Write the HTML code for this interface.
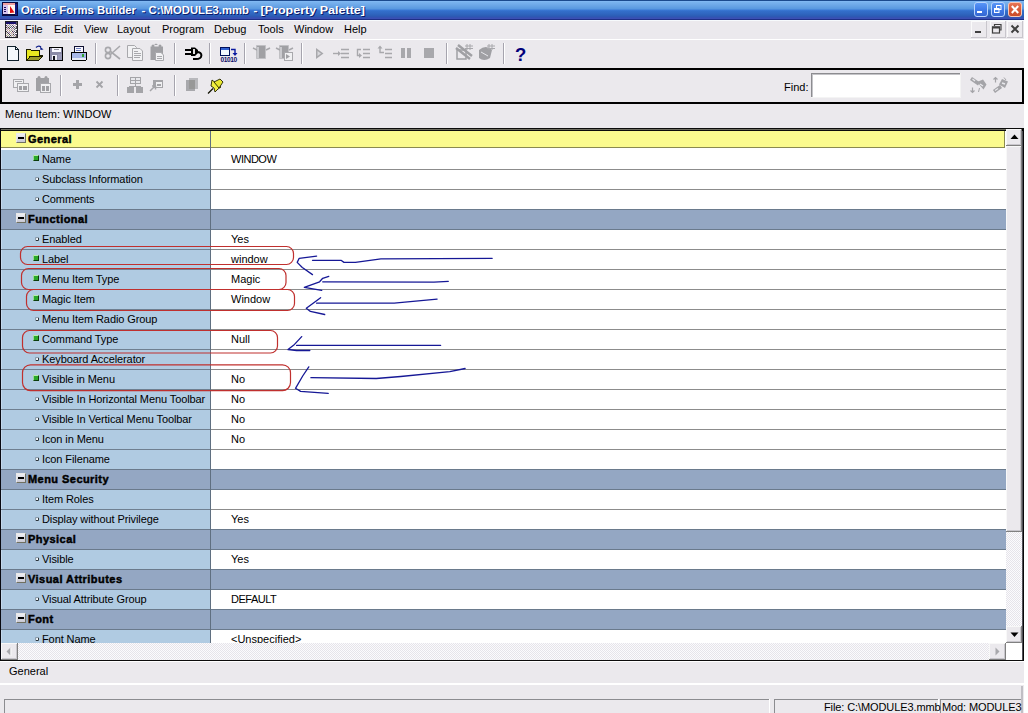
<!DOCTYPE html>
<html><head><meta charset="utf-8">
<style>
*{margin:0;padding:0;box-sizing:border-box}
html,body{width:1028px;height:713px;overflow:hidden;background:#fff}
body{position:relative;font-family:"Liberation Sans",sans-serif;font-size:11px;color:#000}
.a{position:absolute}
#win{position:absolute;left:0;top:0;width:1024px;height:713px;background:#ebe9ed;overflow:hidden}
#title{position:absolute;left:0;top:0;width:1024px;height:20px;
 background:linear-gradient(#1b4a8e 0px,#1b4a8e 1px,#86bcf8 1px,#7ab4ee 2px,#72aceb 4px,#68a4e6 6px,#5898e0 9px,#3c7ad6 10px,#336fcb 11px,#3169c4 13px,#2d62ba 15px,#2e56b2 17px,#3a4fb4 18px,#3a4fb4 19px,#1f2f86 19px,#1f2f86 20px)}
#title .tt{position:absolute;left:21px;top:3px;font-weight:bold;font-size:11.6px;color:#fff;white-space:pre;text-shadow:1px 1px 0 #0a1e70;letter-spacing:0.1px}
#menubar{position:absolute;left:0;top:20px;width:1024px;height:19px;background:#ebe9ed;border-top:1px solid #f6fafc}
.mi{position:absolute;top:2px;white-space:pre}
#tb1{position:absolute;left:0;top:39px;width:1024px;height:29px;border-top:1px solid #fff}
#tb2{position:absolute;left:0;top:68px;width:1024px;height:36px;border:2px solid #000;border-right-width:2px}
#lbl{position:absolute;left:5px;top:108px;white-space:pre}
#grid{position:absolute;left:0;top:128px;width:1024px;height:533px;border:2px solid #000;border-top-width:3px;background:#fff}
#vscroll{position:absolute;left:1005px;top:131px;width:17px;height:512px;background:#f0eff3}
#hscroll{position:absolute;left:2px;top:643px;width:1020px;height:16px;background:#f0eff3}
.namecol{position:absolute;left:1px;top:150px;width:209px;border-left:1px solid #c4d8ec;height:493px;background:#b0cbe2}
.vdiv{position:absolute;left:210px;top:131px;width:1px;height:512px;background:#5f6f80}
.line{position:absolute;left:1px;width:209px;height:1px;background:#6f7f90}
.line2{position:absolute;left:211px;width:795px;height:1px;background:#8c8c8c}
.hrow{position:absolute;left:1px;width:1006px;height:21px;background:#94a7c3;border-top:1px solid #6a7a8c;border-bottom:1px solid #6a7a8c}
.mbox{position:absolute;left:16px;width:10px;height:10px;background:linear-gradient(#f0f0f4,#c8c8d4);border:1px solid #e8e8e8;border-right-color:#707060;border-bottom-color:#707060}
.mbox i{position:absolute;left:1px;top:3px;width:6px;height:2px;background:#000}
.ht{position:absolute;left:28px;height:19px;line-height:19px;font-weight:bold;white-space:pre;letter-spacing:0.45px;-webkit-text-stroke:0.45px #000}
.nt{position:absolute;left:42px;height:19px;line-height:19px;white-space:pre;letter-spacing:-0.1px}
.vt{position:absolute;left:231px;height:19px;line-height:19px;white-space:pre}
.gsq{position:absolute;left:33px;width:6px;height:6px;background:#2aa82a;border:1px solid #0c3c0c;border-left-color:#9ad89a;border-top-color:#b8ecb0}
.dot{position:absolute;left:35px;width:4px;height:4px;border:1px solid #10181c;border-left-color:#8090a0;border-top-color:#8090a0;border-radius:2px;background:#f8fcff}
#status1{position:absolute;left:0;top:661px;width:1024px;height:22px}
#status2{position:absolute;left:0;top:683px;width:1024px;height:30px;border-top:2px solid #fff}
</style></head><body>
<div id="win">
 <div id="title"><svg class="a" style="left:0;top:0" width="400" height="20"><g font-family="Liberation Sans" font-weight="bold" font-size="11.8" fill="#0c1a6a" transform="translate(1,1)">
<text x="21" y="14" textLength="115" lengthAdjust="spacingAndGlyphs">Oracle Forms Builder</text><text x="141.5" y="14">-</text>
<text x="148.5" y="14" textLength="100.5" lengthAdjust="spacingAndGlyphs">C:\MODULE3.mmb</text><text x="253.5" y="14">-</text>
<text x="260.5" y="14" textLength="104.5" lengthAdjust="spacingAndGlyphs">[Property Palette]</text></g>
<g font-family="Liberation Sans" font-weight="bold" font-size="11.8" fill="#ffffff">
<text x="21" y="14" textLength="115" lengthAdjust="spacingAndGlyphs">Oracle Forms Builder</text><text x="141.5" y="14">-</text>
<text x="148.5" y="14" textLength="100.5" lengthAdjust="spacingAndGlyphs">C:\MODULE3.mmb</text><text x="253.5" y="14">-</text>
<text x="260.5" y="14" textLength="104.5" lengthAdjust="spacingAndGlyphs">[Property Palette]</text></g></svg></div>
 <div id="menubar">
  <div class="mi" style="left:25px">File</div>
  <div class="mi" style="left:54px">Edit</div>
  <div class="mi" style="left:84px">View</div>
  <div class="mi" style="left:117px">Layout</div>
  <div class="mi" style="left:162px">Program</div>
  <div class="mi" style="left:214px">Debug</div>
  <div class="mi" style="left:258px">Tools</div>
  <div class="mi" style="left:294px">Window</div>
  <div class="mi" style="left:344px">Help</div>
 </div>
 <div id="tb1"></div>
 <div id="tb2"></div>
<svg class="a" style="left:0;top:0" width="1028" height="713" viewBox="0 0 1028 713">
<g shape-rendering="crispEdges">
<!-- menu icon -->
<rect x="5" y="21" width="13" height="17" fill="#202028"/>
<rect x="6" y="22" width="11" height="2" fill="#18106a"/>
<rect x="6" y="24" width="2" height="1" fill="#b8b0d8"/>
<rect x="6" y="24" width="1" height="1" fill="#f4f0f8"/>
<rect x="7" y="24" width="1" height="1" fill="#c0b0c0"/>
<rect x="8" y="24" width="1" height="1" fill="#e0f0e8"/>
<rect x="9" y="24" width="1" height="1" fill="#8888a0"/>
<rect x="10" y="24" width="1" height="1" fill="#e8d8c8"/>
<rect x="11" y="24" width="1" height="1" fill="#c0b0c0"/>
<rect x="12" y="24" width="1" height="1" fill="#f0d0e8"/>
<rect x="13" y="24" width="1" height="1" fill="#c0b0c0"/>
<rect x="14" y="24" width="1" height="1" fill="#ffffff"/>
<rect x="15" y="24" width="1" height="1" fill="#c0b0c0"/>
<rect x="6" y="25" width="1" height="1" fill="#404048"/>
<rect x="7" y="25" width="1" height="1" fill="#f0d0e8"/>
<rect x="8" y="25" width="1" height="1" fill="#b0a088"/>
<rect x="9" y="25" width="1" height="1" fill="#e0f0e8"/>
<rect x="10" y="25" width="1" height="1" fill="#8888a0"/>
<rect x="11" y="25" width="1" height="1" fill="#f4f0f8"/>
<rect x="12" y="25" width="1" height="1" fill="#606070"/>
<rect x="13" y="25" width="1" height="1" fill="#e0f0e8"/>
<rect x="14" y="25" width="1" height="1" fill="#c0b0c0"/>
<rect x="15" y="25" width="1" height="1" fill="#f0d0e8"/>
<rect x="6" y="26" width="1" height="1" fill="#f0d0e8"/>
<rect x="7" y="26" width="1" height="1" fill="#8888a0"/>
<rect x="8" y="26" width="1" height="1" fill="#f4f0f8"/>
<rect x="9" y="26" width="1" height="1" fill="#8888a0"/>
<rect x="10" y="26" width="1" height="1" fill="#e0f0e8"/>
<rect x="11" y="26" width="1" height="1" fill="#606070"/>
<rect x="12" y="26" width="1" height="1" fill="#ffffff"/>
<rect x="13" y="26" width="1" height="1" fill="#404048"/>
<rect x="14" y="26" width="1" height="1" fill="#f4f0f8"/>
<rect x="15" y="26" width="1" height="1" fill="#c0b0c0"/>
<rect x="6" y="27" width="1" height="1" fill="#404048"/>
<rect x="7" y="27" width="1" height="1" fill="#e8d8c8"/>
<rect x="8" y="27" width="1" height="1" fill="#404048"/>
<rect x="9" y="27" width="1" height="1" fill="#e8d8c8"/>
<rect x="10" y="27" width="1" height="1" fill="#606070"/>
<rect x="11" y="27" width="1" height="1" fill="#e0f0e8"/>
<rect x="12" y="27" width="1" height="1" fill="#606070"/>
<rect x="13" y="27" width="1" height="1" fill="#f0d0e8"/>
<rect x="14" y="27" width="1" height="1" fill="#606070"/>
<rect x="15" y="27" width="1" height="1" fill="#e0f0e8"/>
<rect x="6" y="28" width="1" height="1" fill="#f0d0e8"/>
<rect x="7" y="28" width="1" height="1" fill="#8888a0"/>
<rect x="8" y="28" width="1" height="1" fill="#e8d8c8"/>
<rect x="9" y="28" width="1" height="1" fill="#404048"/>
<rect x="10" y="28" width="1" height="1" fill="#ffffff"/>
<rect x="11" y="28" width="1" height="1" fill="#8888a0"/>
<rect x="12" y="28" width="1" height="1" fill="#f0d0e8"/>
<rect x="13" y="28" width="1" height="1" fill="#8888a0"/>
<rect x="14" y="28" width="1" height="1" fill="#e8d8c8"/>
<rect x="15" y="28" width="1" height="1" fill="#606070"/>
<rect x="6" y="29" width="1" height="1" fill="#b0a088"/>
<rect x="7" y="29" width="1" height="1" fill="#f0d0e8"/>
<rect x="8" y="29" width="1" height="1" fill="#c0b0c0"/>
<rect x="9" y="29" width="1" height="1" fill="#f0d0e8"/>
<rect x="10" y="29" width="1" height="1" fill="#c0b0c0"/>
<rect x="11" y="29" width="1" height="1" fill="#e8d8c8"/>
<rect x="12" y="29" width="1" height="1" fill="#c0b0c0"/>
<rect x="13" y="29" width="1" height="1" fill="#e0f0e8"/>
<rect x="14" y="29" width="1" height="1" fill="#606070"/>
<rect x="15" y="29" width="1" height="1" fill="#e0f0e8"/>
<rect x="6" y="30" width="1" height="1" fill="#f4f0f8"/>
<rect x="7" y="30" width="1" height="1" fill="#b0a088"/>
<rect x="8" y="30" width="1" height="1" fill="#ffffff"/>
<rect x="9" y="30" width="1" height="1" fill="#b0a088"/>
<rect x="10" y="30" width="1" height="1" fill="#e0f0e8"/>
<rect x="11" y="30" width="1" height="1" fill="#8888a0"/>
<rect x="12" y="30" width="1" height="1" fill="#e8d8c8"/>
<rect x="13" y="30" width="1" height="1" fill="#c0b0c0"/>
<rect x="14" y="30" width="1" height="1" fill="#e0f0e8"/>
<rect x="15" y="30" width="1" height="1" fill="#c0b0c0"/>
<rect x="6" y="31" width="1" height="1" fill="#404048"/>
<rect x="7" y="31" width="1" height="1" fill="#f4f0f8"/>
<rect x="8" y="31" width="1" height="1" fill="#c0b0c0"/>
<rect x="9" y="31" width="1" height="1" fill="#e8d8c8"/>
<rect x="10" y="31" width="1" height="1" fill="#b0a088"/>
<rect x="11" y="31" width="1" height="1" fill="#ffffff"/>
<rect x="12" y="31" width="1" height="1" fill="#404048"/>
<rect x="13" y="31" width="1" height="1" fill="#f0d0e8"/>
<rect x="14" y="31" width="1" height="1" fill="#606070"/>
<rect x="15" y="31" width="1" height="1" fill="#ffffff"/>
<rect x="6" y="32" width="1" height="1" fill="#e8d8c8"/>
<rect x="7" y="32" width="1" height="1" fill="#404048"/>
<rect x="8" y="32" width="1" height="1" fill="#f0d0e8"/>
<rect x="9" y="32" width="1" height="1" fill="#8888a0"/>
<rect x="10" y="32" width="1" height="1" fill="#ffffff"/>
<rect x="11" y="32" width="1" height="1" fill="#b0a088"/>
<rect x="12" y="32" width="1" height="1" fill="#f0d0e8"/>
<rect x="13" y="32" width="1" height="1" fill="#606070"/>
<rect x="14" y="32" width="1" height="1" fill="#ffffff"/>
<rect x="15" y="32" width="1" height="1" fill="#404048"/>
<rect x="6" y="33" width="1" height="1" fill="#c0b0c0"/>
<rect x="7" y="33" width="1" height="1" fill="#e0f0e8"/>
<rect x="8" y="33" width="1" height="1" fill="#404048"/>
<rect x="9" y="33" width="1" height="1" fill="#f0d0e8"/>
<rect x="10" y="33" width="1" height="1" fill="#c0b0c0"/>
<rect x="11" y="33" width="1" height="1" fill="#e8d8c8"/>
<rect x="12" y="33" width="1" height="1" fill="#c0b0c0"/>
<rect x="13" y="33" width="1" height="1" fill="#e8d8c8"/>
<rect x="14" y="33" width="1" height="1" fill="#c0b0c0"/>
<rect x="15" y="33" width="1" height="1" fill="#f4f0f8"/>
<rect x="6" y="34" width="1" height="1" fill="#ffffff"/>
<rect x="7" y="34" width="1" height="1" fill="#b0a088"/>
<rect x="8" y="34" width="1" height="1" fill="#ffffff"/>
<rect x="9" y="34" width="1" height="1" fill="#404048"/>
<rect x="10" y="34" width="1" height="1" fill="#ffffff"/>
<rect x="11" y="34" width="1" height="1" fill="#c0b0c0"/>
<rect x="12" y="34" width="1" height="1" fill="#e0f0e8"/>
<rect x="13" y="34" width="1" height="1" fill="#404048"/>
<rect x="14" y="34" width="1" height="1" fill="#f4f0f8"/>
<rect x="15" y="34" width="1" height="1" fill="#606070"/>
<rect x="6" y="35" width="1" height="1" fill="#b0a088"/>
<rect x="7" y="35" width="1" height="1" fill="#e0f0e8"/>
<rect x="8" y="35" width="1" height="1" fill="#b0a088"/>
<rect x="9" y="35" width="1" height="1" fill="#f4f0f8"/>
<rect x="10" y="35" width="1" height="1" fill="#404048"/>
<rect x="11" y="35" width="1" height="1" fill="#e8d8c8"/>
<rect x="12" y="35" width="1" height="1" fill="#b0a088"/>
<rect x="13" y="35" width="1" height="1" fill="#e8d8c8"/>
<rect x="14" y="35" width="1" height="1" fill="#8888a0"/>
<rect x="15" y="35" width="1" height="1" fill="#f0d0e8"/>
<rect x="6" y="36" width="1" height="1" fill="#f0d0e8"/>
<rect x="7" y="36" width="1" height="1" fill="#606070"/>
<rect x="8" y="36" width="1" height="1" fill="#e0f0e8"/>
<rect x="9" y="36" width="1" height="1" fill="#606070"/>
<rect x="10" y="36" width="1" height="1" fill="#e0f0e8"/>
<rect x="11" y="36" width="1" height="1" fill="#c0b0c0"/>
<rect x="12" y="36" width="1" height="1" fill="#ffffff"/>
<rect x="13" y="36" width="1" height="1" fill="#c0b0c0"/>
<rect x="14" y="36" width="1" height="1" fill="#e0f0e8"/>
<rect x="15" y="36" width="1" height="1" fill="#b0a088"/>
<rect x="16" y="22" width="1" height="15" fill="#505058"/>
<rect x="16" y="25" width="1" height="1" fill="#fff"/><rect x="16" y="29" width="1" height="1" fill="#fff"/><rect x="16" y="33" width="1" height="1" fill="#fff"/>
<!-- new doc -->
<path d="M7.5 46.5 H15.5 L18.5 49.5 V60.5 H7.5 Z" fill="#f4f8fc" stroke="#10202c" stroke-width="1"/>
<path d="M15.5 46.5 V49.5 H18.5" fill="none" stroke="#10202c"/>
<!-- open folder -->
<path d="M26.5 49.5 H30.5 L31.5 50.5 H39.5 V55.5 H42.5 L38.5 60.5 H26.5 Z" fill="#e8e820" stroke="#1a1a00"/>
<path d="M27.5 60 L30 56.5 H42.5 L38.5 60.5 Z" fill="#9a9a2a" stroke="#1a1a00"/>
<path d="M36 47.5 Q38.5 45 41 47" fill="none" stroke="#10208a" stroke-width="1.3" shape-rendering="auto"/>
<path d="M40 46.5 L43.5 49.5 L40.5 50 Z" fill="#10208a" shape-rendering="auto"/>
<!-- floppy -->
<rect x="49.5" y="47.5" width="13" height="13" fill="#8a8aa6" stroke="#000"/>
<rect x="52" y="48" width="9" height="4" fill="#f8f8ff"/>
<rect x="54" y="49" width="5" height="1" fill="#9090a0"/>
<rect x="52" y="55" width="5" height="5" fill="#f0f0f8"/>
<rect x="53" y="56" width="2" height="4" fill="#101018"/>
<rect x="58" y="54" width="4" height="6" fill="#9a9ab8"/>
<!-- printer -->
<rect x="74.5" y="46.5" width="9" height="6" fill="#f8f8ff" stroke="#101030"/>
<rect x="76" y="48" width="5" height="1" fill="#7080c0"/><rect x="76" y="50" width="5" height="1" fill="#7080c0"/>
<rect x="71.5" y="52.5" width="15" height="7" fill="#a8b8e8" stroke="#000" rx="1"/>
<rect x="72" y="58" width="14" height="2" fill="#e8ecf8"/>
<rect x="82" y="54" width="2" height="3" fill="#30a030"/>
<rect x="72" y="60" width="14" height="1" fill="#000"/>
<!-- separators -->
<g fill="#a6a4ae"><rect x="95" y="43" width="1" height="21"/><rect x="174" y="43" width="1" height="21"/><rect x="209" y="43" width="1" height="21"/><rect x="244" y="43" width="1" height="21"/><rect x="301" y="43" width="1" height="21"/><rect x="446" y="43" width="1" height="21"/><rect x="503" y="43" width="1" height="21"/></g>
<g fill="#ffffff"><rect x="96" y="43" width="1" height="21"/><rect x="175" y="43" width="1" height="21"/><rect x="210" y="43" width="1" height="21"/><rect x="245" y="43" width="1" height="21"/><rect x="302" y="43" width="1" height="21"/><rect x="447" y="43" width="1" height="21"/><rect x="504" y="43" width="1" height="21"/></g>
</g>
<g shape-rendering="auto">
<!-- scissors gray -->
<g fill="none" stroke="#a8a8ac" stroke-width="1.6">
<circle cx="108" cy="50" r="2.6"/><circle cx="108" cy="56" r="2.6"/>
<path d="M110.5 51.5 L120 59 M110.5 54.5 L120 46"/>
</g>
<!-- copy gray -->
<path d="M127.5 45.5 H134.5 L136.5 47.5 V57.5 H127.5 Z" fill="#f2f2f4" stroke="#a8a8ac"/>
<path d="M132.5 48.5 H140 L142.5 51 V60.5 H132.5 Z" fill="#f2f2f4" stroke="#a8a8ac"/>
<g stroke="#a8a8ac"><path d="M134 51.5 H138 M134 53.5 H141 M134 55.5 H141 M134 57.5 H140"/></g>
<!-- paste gray -->
<path d="M150.5 46.5 H163 V60 H150.5 Z" fill="#a0a0a4"/>
<circle cx="153" cy="46" r="1.5" fill="#a0a0a4"/><circle cx="160" cy="46" r="1.5" fill="#a0a0a4"/><path d="M154 45 L158 45 L156 43.5Z" fill="#a0a0a4"/>
<path d="M155.5 52.5 H161 L163.5 55 V60.5 H155.5 Z" fill="#f2f2f4" stroke="#a8a8ac"/>
<path d="M157 56.5 H162 M157 58.5 H162" stroke="#a8a8ac"/>
<!-- plug black -->
<g fill="#000">
<rect x="185" y="49" width="7" height="2"/><rect x="185" y="53" width="7" height="2"/>
<path d="M191 47.5 H195 L198 50 V53 L195 56 H191 Z"/>
</g>
<path d="M197 52 C203 52 203 59 196 59 L193 59" fill="none" stroke="#000" stroke-width="2"/>
<rect x="193" y="49" width="2" height="5" fill="#ddd"/>
<!-- compile -->
<rect x="220.5" y="47.5" width="9" height="8" fill="#f4f8ff" stroke="#00105a"/>
<rect x="221" y="48" width="8" height="2" fill="#3060d0"/>
<path d="M231 49.5 H235 V54" fill="none" stroke="#0a1aa0" stroke-width="1.4"/>
<path d="M232.5 53 H237.5 L235 56 Z" fill="#0a1aa0"/>
<text x="220.5" y="61.8" font-family="Liberation Sans" font-size="6.6" font-weight="bold" fill="#10106a" letter-spacing="-0.4">01010</text>
<!-- gray icons A, B -->
<path d="M256.5 45.5 H265.5 V58.5 H256.5 Z" fill="#a0a0a4" stroke="#c0c0c4"/>
<path d="M253 48 L257 50 M270 48 L266 50" stroke="#a8a8ac" stroke-width="1.5"/>
<path d="M258 47 V58" stroke="#f4f4f8"/>
<path d="M279.5 45.5 H288.5 V58.5 H279.5 Z" fill="#a0a0a4" stroke="#c0c0c4"/>
<path d="M276 48 L280 50 M293 48 L289 50" stroke="#a8a8ac" stroke-width="1.5"/>
<path d="M281 47 V58" stroke="#f4f4f8"/>
<rect x="284.5" y="52.5" width="8" height="8" fill="#f0f0f2" stroke="#a8a8ac"/>
<path d="M286 54 L290 56.5 L286 59 Z" fill="#a0a0a4"/>
<!-- play -->
<path d="M316 48 L323.5 53.5 L316 59 Z" fill="#a8a8ac"/>
<path d="M317.5 51 L321 53.5 L317.5 56 Z" fill="#d8d8dc"/>
<!-- step into -->
<g stroke="#a8a8ac" stroke-width="1.4">
<path d="M333 53.5 H339"/><path d="M341 49.5 H349 M341 53.5 H349 M341 57.5 H349"/>
</g>
<path d="M338 51 L341 53.5 L338 56 Z" fill="#a8a8ac"/>
<!-- step over -->
<g stroke="#a8a8ac" stroke-width="1.4" fill="none">
<path d="M361 49.5 H357.5 V55.5 H360"/><path d="M363 49.5 H370 M363 53.5 H370 M363 57.5 H370"/>
</g>
<path d="M359 53 L362 55.5 L359 58 Z" fill="#a8a8ac"/>
<!-- step out -->
<g stroke="#a8a8ac" stroke-width="1.4" fill="none">
<path d="M380 47 V52.5 H384"/><path d="M385 49.5 H392 M385 53.5 H392 M385 57.5 H392"/>
</g>
<path d="M377.5 48.5 L380 45.5 L382.5 48.5 Z" fill="#a8a8ac"/>
<!-- pause stop -->
<rect x="401" y="48" width="4" height="10" fill="#a8a8ac"/><rect x="407" y="48" width="4" height="10" fill="#a8a8ac"/>
<rect x="424" y="48" width="10" height="10" fill="#a8a8ac"/>
<!-- icons C D -->
<path d="M456 48 L470 59 M458 45 L472 56" stroke="#a0a0a4" stroke-width="2.5"/>
<rect x="457" y="50" width="9" height="9" fill="none" stroke="#a0a0a4" stroke-width="1.5"/>
<path d="M467 44 V50 M470 44 V50 M465 46 H473 M465 48.5 H473" stroke="#a8a8ac"/>
<path d="M479 50 Q486 44 492 50 L490 58 Q484 62 479 58 Z" fill="#a0a0a4"/>
<path d="M481 52 L488 56" stroke="#e8e8ec"/>
<path d="M489 44 V50 M492 44 V50 M487 46 H495 M487 48.5 H495" stroke="#a8a8ac"/>
<!-- help -->
<text x="515" y="61" font-family="Liberation Sans" font-size="18.5" font-weight="bold" fill="#00007a">?</text>
</g>
</svg>

<svg class="a" style="left:0;top:0" width="1028" height="713" viewBox="0 0 1028 713">
<!-- app icon -->
<g shape-rendering="crispEdges">
<rect x="2" y="2" width="16" height="14" fill="#0a0a40"/>
<rect x="3" y="3" width="5" height="11" fill="#d8c8f0"/>
<rect x="4" y="7" width="2" height="1" fill="#201060"/><rect x="4" y="9" width="2" height="1" fill="#201060"/><rect x="4" y="11" width="2" height="1" fill="#201060"/>
<rect x="8" y="5" width="7" height="9" fill="#fff8f0"/>
<rect x="3" y="3" width="12" height="2" fill="#f0a0a0"/>
<rect x="15" y="4" width="2" height="11" fill="#101880"/>
</g>
<path d="M10 6 L14.5 12.5 L10 13 Z" fill="#e01010"/>
<!-- title buttons -->
<defs>
<linearGradient id="bb" x1="0" y1="0" x2="0" y2="1"><stop offset="0" stop-color="#5a98f8"/><stop offset="0.5" stop-color="#3f7ae8"/><stop offset="1" stop-color="#3466d0"/></linearGradient>
<linearGradient id="rb" x1="0" y1="0" x2="0" y2="1"><stop offset="0" stop-color="#e87858"/><stop offset="0.5" stop-color="#d85a38"/><stop offset="1" stop-color="#c84a28"/></linearGradient>
</defs>
<g>
<rect x="974.5" y="2.5" width="13" height="14" rx="2.5" fill="url(#bb)" stroke="#b8d4fc"/>
<rect x="977" y="11" width="5" height="2" fill="#fff"/>
<rect x="991.5" y="2.5" width="13" height="14" rx="2.5" fill="url(#bb)" stroke="#b8d4fc"/>
<rect x="996.5" y="5.5" width="4.5" height="4" fill="none" stroke="#fff"/>
<rect x="994.5" y="8.5" width="4.5" height="4" fill="#4a86ec" stroke="#fff"/>
<rect x="995" y="9" width="4" height="1" fill="#fff"/>
<rect x="1008.5" y="2.5" width="13" height="14" rx="2.5" fill="url(#rb)" stroke="#f8c8b8"/>
<path d="M1011.8 6 L1018.2 13 M1018.2 6 L1011.8 13" stroke="#fff" stroke-width="2"/>
</g>
<!-- MDI buttons -->
<g shape-rendering="crispEdges">
<rect x="971" y="21" width="16" height="16" fill="#ebe9ed"/>
<rect x="971" y="21" width="16" height="1" fill="#fafafa"/><rect x="971" y="21" width="1" height="16" fill="#fafafa"/>
<rect x="971" y="37" width="16" height="1" fill="#c8c6cc"/><rect x="986" y="21" width="1" height="17" fill="#c8c6cc"/>
<rect x="975" y="31" width="6" height="2" fill="#404040"/>
<rect x="990" y="21" width="16" height="16" fill="#ebe9ed"/>
<rect x="990" y="21" width="16" height="1" fill="#fafafa"/><rect x="990" y="21" width="1" height="16" fill="#fafafa"/>
<rect x="990" y="37" width="16" height="1" fill="#c8c6cc"/><rect x="1005" y="21" width="1" height="17" fill="#c8c6cc"/>
<rect x="1007" y="21" width="16" height="16" fill="#ebe9ed"/>
<rect x="1007" y="21" width="16" height="1" fill="#fafafa"/><rect x="1007" y="21" width="1" height="16" fill="#fafafa"/>
<rect x="1007" y="37" width="16" height="1" fill="#c8c6cc"/><rect x="1022" y="21" width="1" height="17" fill="#c8c6cc"/>
</g>
<path d="M994.5 26 V24.5 H1001 V30 H999.5" fill="none" stroke="#404040" stroke-width="1.2"/>
<rect x="992.5" y="27" width="7" height="6" fill="none" stroke="#404040" stroke-width="1.2"/>
<rect x="992" y="26.5" width="8" height="2" fill="#404040"/>
<path d="M1011.5 25.5 L1018.5 32.5 M1018.5 25.5 L1011.5 32.5" stroke="#404040" stroke-width="2"/>

<!-- tb2 icons -->
<g fill="none" stroke="#a8a8ac">
<rect x="13.5" y="79.5" width="10" height="8" fill="#f0f0f2"/>
<rect x="17.5" y="83.5" width="11" height="8" fill="#f0f0f2"/>
</g>
<rect x="15" y="81" width="7" height="1" fill="#a8a8ac"/>
<rect x="19" y="86" width="3" height="4" fill="#a0a0a4"/><rect x="23" y="86" width="4" height="4" fill="#a0a0a4"/>
<path d="M36 78 H49 V91 H36 Z" fill="#a0a0a4"/>
<circle cx="39" cy="77.5" r="1.5" fill="#a0a0a4"/><circle cx="46" cy="77.5" r="1.5" fill="#a0a0a4"/>
<rect x="40.5" y="83.5" width="10" height="9" fill="#f0f0f2" stroke="#a8a8ac"/>
<rect x="42" y="86" width="3" height="5" fill="#a0a0a4"/><rect x="46" y="86" width="3" height="5" fill="#a0a0a4"/>
<g shape-rendering="crispEdges">
<rect x="60" y="75" width="1" height="21" fill="#a6a4ae"/><rect x="61" y="75" width="1" height="21" fill="#fff"/>
<rect x="117" y="75" width="1" height="21" fill="#a6a4ae"/><rect x="118" y="75" width="1" height="21" fill="#fff"/>
<rect x="174" y="75" width="1" height="21" fill="#a6a4ae"/><rect x="175" y="75" width="1" height="21" fill="#fff"/>
<rect x="76" y="80" width="3" height="9" fill="#a4a4a8"/><rect x="73" y="83" width="9" height="3" fill="#a4a4a8"/>
<rect x="130" y="77" width="11" height="7" fill="#a4a4a8"/>
<rect x="131" y="78" width="4" height="2" fill="#e8e8ec"/><rect x="136" y="78" width="4" height="2" fill="#e8e8ec"/>
<rect x="131" y="81" width="4" height="2" fill="#e8e8ec"/><rect x="136" y="81" width="4" height="2" fill="#e8e8ec"/>
<rect x="135" y="84" width="1" height="2" fill="#a4a4a8"/><rect x="129" y="86" width="12" height="1" fill="#a4a4a8"/>
<rect x="127" y="87" width="7" height="6" fill="#a4a4a8"/><rect x="136" y="87" width="7" height="6" fill="#a4a4a8"/>
<rect x="153" y="80" width="10" height="8" fill="#a4a4a8"/><rect x="156" y="82" width="6" height="5" fill="#f0f0f2"/><rect x="157" y="84" width="4" height="2" fill="#a4a4a8"/>
</g>
<path d="M96.5 81.5 L102.5 87.5 M102.5 81.5 L96.5 87.5" stroke="#a4a4a8" stroke-width="1.8"/>
<path d="M150 91 L155 86 M152 86 H155.5 V89.5" stroke="#a4a4a8" stroke-width="1.5" fill="none"/>
<rect x="186" y="80" width="9" height="11" fill="#a8a8ac"/><rect x="189" y="78" width="9" height="11" fill="#b8b8bc"/>
<rect x="189" y="80" width="6" height="9" fill="#989898"/>
<path d="M212 80 L221 87 L218 89 L215 92 L214 88 L211 86 Z" fill="#f0f040" stroke="#202000" stroke-width="0.9"/>
<path d="M214 82 L220 79 L223 82 L219 88 Z" fill="#e8e830" stroke="#202000" stroke-width="0.9"/>
<path d="M208 93.5 L213 88.5" stroke="#101000" stroke-width="1.2"/>

<!-- find -->
<text x="784" y="91" font-family="Liberation Sans" font-size="11" fill="#000">Find:</text>
<g shape-rendering="crispEdges">
<rect x="811" y="73" width="150" height="25" fill="#fff"/>
<rect x="811" y="73" width="150" height="1" fill="#8c8c90"/><rect x="811" y="73" width="1" height="25" fill="#8c8c90"/>
<rect x="812" y="74" width="148" height="1" fill="#c4c4c8"/><rect x="812" y="74" width="1" height="23" fill="#c4c4c8"/>
<rect x="811" y="97" width="150" height="1" fill="#f4f4f4"/><rect x="960" y="73" width="1" height="25" fill="#f4f4f4"/>
</g>
<path d="M971 78.5 L979 84" stroke="#a4a4a8" stroke-width="3.6"/>
<path d="M972.5 79 L975 81" stroke="#e8e8ec" stroke-width="1.2"/>
<path d="M977 82 L983 79.5 L986.5 84.5 L983.5 89.5 Z" fill="#a4a4a8"/>
<path d="M980 84 L983 86" stroke="#e8e8ec" stroke-width="1.4"/>
<path d="M979.5 88 L978.5 92" stroke="#a4a4a8" stroke-width="1"/>
<path d="M972.5 87.5 V92.5 M970.5 90.5 L972.5 92.5 L974.5 90.5" stroke="#a4a4a8" stroke-width="1.2" fill="none"/>
<path d="M994 91.5 L1001 86.5" stroke="#a4a4a8" stroke-width="3.6"/>
<path d="M995 90.5 L998 88.5" stroke="#e8e8ec" stroke-width="1.2"/>
<path d="M999 84.5 L1002 79 L1008 81.5 L1005 88 Z" fill="#a4a4a8"/>
<path d="M1002 83 L1005 84" stroke="#e8e8ec" stroke-width="1.4"/>
<path d="M1004 77.5 L1006 80" stroke="#a4a4a8" stroke-width="1"/>
<path d="M995.5 82.5 V77.5 M993.5 79.5 L995.5 77.5 L997.5 79.5" stroke="#a4a4a8" stroke-width="1.2" fill="none"/>
</svg>

 <div id="lbl">Menu Item: WINDOW</div>
 <div id="grid"></div>
 <div class="a" style="left:1px;top:131px;width:1004px;height:16px;background:#fbfb8e;border-right:1px solid #8a8a50"></div>
 <div class="a" style="left:1px;top:147px;width:1004px;height:1px;background:#8a8a50"></div>
 <div class="a" style="left:1px;top:148px;width:1004px;height:2px;background:#fff"></div>
 <div class="namecol"></div>
 <div class="mbox" style="top:133px"><i></i></div>
 <div class="ht" style="top:130px">General</div>
<div class="line" style="top:169px"></div><div class="line2" style="top:169px"></div>
<div class="gsq" style="top:155px"></div>
<div class="nt" style="top:150px">Name</div>
<div class="vt" style="top:150px;letter-spacing:-0.5px;">WINDOW</div>
<div class="line" style="top:189px"></div><div class="line2" style="top:189px"></div>
<div class="dot" style="top:177px"></div>
<div class="nt" style="top:170px">Subclass Information</div>
<div class="line" style="top:209px"></div><div class="line2" style="top:209px"></div>
<div class="dot" style="top:197px"></div>
<div class="nt" style="top:190px">Comments</div>
<div class="hrow" style="top:209px"></div>
<div class="mbox" style="top:213px"><i></i></div>
<div class="ht" style="top:210px">Functional</div>
<div class="line" style="top:249px"></div><div class="line2" style="top:249px"></div>
<div class="dot" style="top:237px"></div>
<div class="nt" style="top:230px">Enabled</div>
<div class="vt" style="top:230px;">Yes</div>
<div class="line" style="top:269px"></div><div class="line2" style="top:269px"></div>
<div class="gsq" style="top:255px"></div>
<div class="nt" style="top:250px">Label</div>
<div class="vt" style="top:250px;">window</div>
<div class="line" style="top:289px"></div><div class="line2" style="top:289px"></div>
<div class="gsq" style="top:275px"></div>
<div class="nt" style="top:270px">Menu Item Type</div>
<div class="vt" style="top:270px;">Magic</div>
<div class="line" style="top:309px"></div><div class="line2" style="top:309px"></div>
<div class="gsq" style="top:295px"></div>
<div class="nt" style="top:290px">Magic Item</div>
<div class="vt" style="top:290px;">Window</div>
<div class="line" style="top:329px"></div><div class="line2" style="top:329px"></div>
<div class="dot" style="top:317px"></div>
<div class="nt" style="top:310px">Menu Item Radio Group</div>
<div class="line" style="top:349px"></div><div class="line2" style="top:349px"></div>
<div class="gsq" style="top:335px"></div>
<div class="nt" style="top:330px">Command Type</div>
<div class="vt" style="top:330px;">Null</div>
<div class="line" style="top:369px"></div><div class="line2" style="top:369px"></div>
<div class="dot" style="top:357px"></div>
<div class="nt" style="top:350px">Keyboard Accelerator</div>
<div class="line" style="top:389px"></div><div class="line2" style="top:389px"></div>
<div class="gsq" style="top:375px"></div>
<div class="nt" style="top:370px">Visible in Menu</div>
<div class="vt" style="top:370px;">No</div>
<div class="line" style="top:409px"></div><div class="line2" style="top:409px"></div>
<div class="dot" style="top:397px"></div>
<div class="nt" style="top:390px">Visible In Horizontal Menu Toolbar</div>
<div class="vt" style="top:390px;">No</div>
<div class="line" style="top:429px"></div><div class="line2" style="top:429px"></div>
<div class="dot" style="top:417px"></div>
<div class="nt" style="top:410px">Visible In Vertical Menu Toolbar</div>
<div class="vt" style="top:410px;">No</div>
<div class="line" style="top:449px"></div><div class="line2" style="top:449px"></div>
<div class="dot" style="top:437px"></div>
<div class="nt" style="top:430px">Icon in Menu</div>
<div class="vt" style="top:430px;">No</div>
<div class="line" style="top:469px"></div><div class="line2" style="top:469px"></div>
<div class="dot" style="top:457px"></div>
<div class="nt" style="top:450px">Icon Filename</div>
<div class="hrow" style="top:469px"></div>
<div class="mbox" style="top:473px"><i></i></div>
<div class="ht" style="top:470px">Menu Security</div>
<div class="line" style="top:509px"></div><div class="line2" style="top:509px"></div>
<div class="dot" style="top:497px"></div>
<div class="nt" style="top:490px">Item Roles</div>
<div class="line" style="top:529px"></div><div class="line2" style="top:529px"></div>
<div class="dot" style="top:517px"></div>
<div class="nt" style="top:510px">Display without Privilege</div>
<div class="vt" style="top:510px;">Yes</div>
<div class="hrow" style="top:529px"></div>
<div class="mbox" style="top:533px"><i></i></div>
<div class="ht" style="top:530px">Physical</div>
<div class="line" style="top:569px"></div><div class="line2" style="top:569px"></div>
<div class="dot" style="top:557px"></div>
<div class="nt" style="top:550px">Visible</div>
<div class="vt" style="top:550px;">Yes</div>
<div class="hrow" style="top:569px"></div>
<div class="mbox" style="top:573px"><i></i></div>
<div class="ht" style="top:570px">Visual Attributes</div>
<div class="line" style="top:609px"></div><div class="line2" style="top:609px"></div>
<div class="dot" style="top:597px"></div>
<div class="nt" style="top:590px">Visual Attribute Group</div>
<div class="vt" style="top:590px;letter-spacing:-0.5px;">DEFAULT</div>
<div class="hrow" style="top:609px"></div>
<div class="mbox" style="top:613px"><i></i></div>
<div class="ht" style="top:610px">Font</div>
<div class="line" style="top:649px"></div><div class="line2" style="top:649px"></div>
<div class="dot" style="top:637px"></div>
<div class="nt" style="top:630px">Font Name</div>
<div class="vt" style="top:630px;">&lt;Unspecified&gt;</div>
 <div class="vdiv"></div>
<svg class="a" style="left:0;top:0" width="1028" height="713" viewBox="0 0 1028 713">
<defs>
<pattern id="chk" width="2" height="2" patternUnits="userSpaceOnUse"><rect width="2" height="2" fill="#fbfbfd"/><rect width="1" height="1" fill="#e6e4ea"/><rect x="1" y="1" width="1" height="1" fill="#e6e4ea"/></pattern>
</defs>
<g shape-rendering="crispEdges">
<!-- vertical scrollbar -->

<rect x="1006" y="129" width="16" height="514" fill="url(#chk)"/>
<!-- up button -->
<rect x="1006" y="129" width="16" height="17" fill="#ebe9ed"/>
<rect x="1006" y="129" width="15" height="1" fill="#f8f8f8"/><rect x="1006" y="129" width="1" height="16" fill="#f8f8f8"/>
<rect x="1006" y="145" width="16" height="1" fill="#808080"/><rect x="1021" y="129" width="1" height="17" fill="#808080"/>
<rect x="1007" y="144" width="14" height="1" fill="#c8c6cc"/><rect x="1020" y="130" width="1" height="15" fill="#c8c6cc"/>
<!-- thumb -->
<rect x="1006" y="146" width="16" height="386" fill="#ebe9ed"/>
<rect x="1006" y="146" width="15" height="1" fill="#f8f8f8"/><rect x="1006" y="146" width="1" height="385" fill="#f8f8f8"/>
<rect x="1006" y="531" width="16" height="1" fill="#808080"/><rect x="1021" y="146" width="1" height="386" fill="#808080"/>
<rect x="1007" y="530" width="14" height="1" fill="#c8c6cc"/><rect x="1020" y="147" width="1" height="384" fill="#c8c6cc"/>
<!-- down button -->
<rect x="1006" y="626" width="16" height="17" fill="#ebe9ed"/>
<rect x="1006" y="626" width="15" height="1" fill="#f8f8f8"/><rect x="1006" y="626" width="1" height="16" fill="#f8f8f8"/>
<rect x="1006" y="642" width="16" height="1" fill="#808080"/><rect x="1021" y="626" width="1" height="17" fill="#808080"/>
<rect x="1007" y="641" width="14" height="1" fill="#c8c6cc"/><rect x="1020" y="627" width="1" height="15" fill="#c8c6cc"/>
<!-- horizontal scrollbar -->
<rect x="1" y="643" width="1005" height="17" fill="url(#chk)"/>
<rect x="1" y="643" width="17" height="17" fill="#ebe9ed"/>
<rect x="1" y="643" width="16" height="1" fill="#f8f8f8"/><rect x="1" y="643" width="1" height="16" fill="#f8f8f8"/>
<rect x="1" y="659" width="17" height="1" fill="#808080"/><rect x="17" y="643" width="1" height="17" fill="#808080"/>
<rect x="2" y="658" width="15" height="1" fill="#c8c6cc"/><rect x="16" y="644" width="1" height="15" fill="#c8c6cc"/>
<rect x="989" y="643" width="17" height="17" fill="#ebe9ed"/>
<rect x="989" y="643" width="16" height="1" fill="#f8f8f8"/><rect x="989" y="643" width="1" height="16" fill="#f8f8f8"/>
<rect x="989" y="659" width="17" height="1" fill="#808080"/><rect x="1005" y="643" width="1" height="17" fill="#808080"/>
<rect x="990" y="658" width="15" height="1" fill="#c8c6cc"/><rect x="1004" y="644" width="1" height="15" fill="#c8c6cc"/>
<rect x="1006" y="643" width="16" height="17" fill="#ffffff"/>
<!-- grid borders -->
<rect x="0" y="128" width="1024" height="1" fill="#0c0c0c"/>
<rect x="0" y="129" width="1006" height="1" fill="#6c6c60"/>
<rect x="0" y="130" width="1006" height="1" fill="#0c0c0c"/>
<rect x="0" y="128" width="1" height="533" fill="#080810"/>
<rect x="1022" y="131" width="1" height="529" fill="#505058"/>
<rect x="1023" y="128" width="1" height="533" fill="#080808"/>
<rect x="0" y="660" width="1024" height="1" fill="#0c0c0c"/>
<rect x="0" y="661" width="1024" height="1" fill="#ffffff"/>
<!-- status bar -->
<rect x="0" y="683" width="1024" height="2" fill="#ffffff"/>
<rect x="4" y="699" width="766" height="1" fill="#8c8c90"/><rect x="4" y="699" width="1" height="14" fill="#8c8c90"/>
<rect x="769" y="699" width="1" height="14" fill="#ffffff"/>
<rect x="774" y="699" width="164" height="1" fill="#8c8c90"/><rect x="774" y="699" width="1" height="14" fill="#8c8c90"/>
<rect x="938" y="699" width="1" height="14" fill="#ffffff"/>
<rect x="940" y="699" width="82" height="1" fill="#8c8c90"/><rect x="940" y="699" width="1" height="14" fill="#8c8c90"/>
<rect x="1021" y="686" width="2" height="27" fill="#c0bec4"/>
</g>
<path d="M1010.5 139 L1014.5 134.5 L1018.5 139 Z" fill="#000"/>
<path d="M1010.5 632.5 L1014.5 637 L1018.5 632.5 Z" fill="#000"/>
<path d="M10.5 647.5 L6.5 651.5 L10.5 655.5 Z" fill="#a8a8ac"/><rect x="10.5" y="648" width="1" height="8" fill="#fafafa"/>
<path d="M995.5 647.5 L999.5 651.5 L995.5 655.5 Z" fill="#a8a8ac"/>
<text x="824" y="711" font-family="Liberation Sans" font-size="11" fill="#000" letter-spacing="-0.1">File: C:\MODULE3.mmb</text>
<text x="942" y="711" font-family="Liberation Sans" font-size="11" fill="#000" letter-spacing="-0.1">Mod: MODULE3</text>
</svg>

<svg class="a" style="left:0;top:0" width="1028" height="713" viewBox="0 0 1028 713">
<g fill="none" stroke="#c0302e" stroke-width="1.2">
<rect x="20.5" y="246.5" width="273" height="18" rx="7"/>
<rect x="21.5" y="268.5" width="264.5" height="21" rx="7"/>
<rect x="26.5" y="289.5" width="268" height="21" rx="7"/>
<rect x="22.5" y="330.5" width="255" height="22.5" rx="7"/>
<rect x="22.5" y="364.8" width="268" height="25.8" rx="8"/>
</g>
<g fill="none" stroke="#161896" stroke-width="1.3" stroke-linejoin="round" stroke-linecap="round">
<path d="M316.6 256.2 L299.2 258.3 L297.2 262.4 L302.3 267.5 L312.5 274.6"/>
<path d="M312.5 260.3 L341 260.3 L344 262.4 L355.4 262.4 L380.9 258.9 L492.2 258.3"/>
<path d="M328.8 276.3 L322.7 278.3 L319.6 281.8 L304.3 287.3 L321.7 290.4"/>
<path d="M322.7 281.8 L434 282.2 L448.3 281.4"/>
<path d="M320.6 297.7 L314.5 302.2 L306.3 308.3 L310.4 311.4 L324.7 314.5"/>
<path d="M316.6 303.2 L394.2 303.2 L437.1 299.1"/>
<path d="M301.7 336.6 L294.5 344.4 L288 349.5 L296.6 350.5 L309.8 350.5"/>
<path d="M296.6 345.4 L440.6 345.4"/>
<path d="M308.8 366.9 L302.7 376 L295.5 388.3 L300.6 391.4 L328.2 393.4"/>
<path d="M310.9 377.7 L376.2 378.5 L400.7 376.5 L449.8 371.6 L465.1 368.5"/>
</g>
</svg>

 <div id="status1"><div class="a" style="left:9px;top:4px">General</div></div>
 <div id="status2"></div>
</div>
</body></html>
